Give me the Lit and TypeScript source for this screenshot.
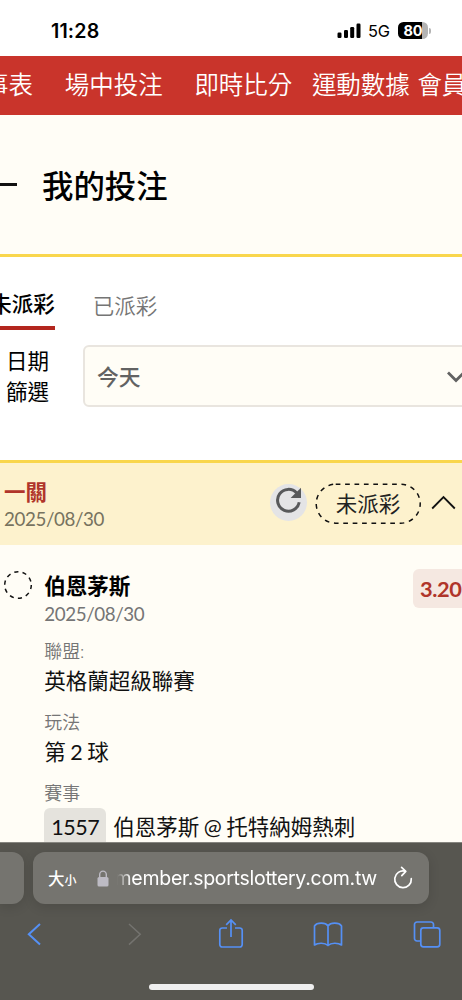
import { LitElement, html, css } from "lit";
import { customElement } from "lit/decorators.js";

@customElement("app-root")
export class AppRoot extends LitElement {
  static styles = css`
    :host {
      display: flex;
      flex-direction: column;
      width: 462px;
      height: 1000px;
      overflow: hidden;
      background: #fff;
      color: #111;
      font-family: "Lato", "Noto Sans CJK TC", sans-serif;
      font-size: 21.5px;
      white-space: nowrap;
    }
    * { box-sizing: border-box; }
    svg { display: block; flex: none; }
    .status {
      flex: none;
      height: 55.5px;
      padding: 6px 31px 0 51px;
      display: flex;
      align-items: center;
      font-family: "Inter", sans-serif;
      color: #000;
    }
    .time { flex: 1; font-size: 19.6px; font-weight: 600; letter-spacing: 0.15px; }
    .net { margin: 0 8px 0 7px; font-size: 16.4px; letter-spacing: -0.2px; width: 22px; }
    .battery { display: flex; align-items: center; gap: 1px; }
    .cell {
      width: 30px;
      height: 17px;
      border-radius: 5.5px;
      background: linear-gradient(90deg, #000 24px, #b3b3b3 24px);
      color: #fff;
      font-size: 14.5px;
      font-weight: 700;
      line-height: 17px;
      text-align: center;
    }
    .tip { width: 2px; height: 6px; border-radius: 0 2px 2px 0; background: #b3b3b3; }
    .nav {
      flex: none;
      height: 59.5px;
      display: flex;
      align-items: center;
      background: #c9342b;
      color: #fff;
      font-size: 24.5px;
      line-height: 36px;
      font-weight: 350;
    }
    .nav span { flex: none; }
    .nav .first { margin-left: -16px; }
    .nav .wide { margin-left: 31.7px; }
    .nav .mid { margin-left: 19.5px; }
    .nav .tight { margin-left: 7.5px; }
    .content {
      flex: 1;
      min-height: 0;
      overflow: hidden;
      display: flex;
      flex-direction: column;
      background: #fffdf6;
    }
    .title {
      flex: none;
      height: 142px;
      display: flex;
      align-items: center;
      gap: 25px;
      border-bottom: 3px solid #f9d64c;
      font-size: 31.4px;
      font-weight: 500;
      color: #000;
    }
    .dash { width: 17px; height: 3px; background: #111; }
    .filters { flex: none; height: 203px; background: #fff; padding-top: 29px; }
    .tabs { display: flex; height: 43px; }
    .tab { line-height: 36px; margin-left: 38px; padding-top: 2px; color: #757575; font-weight: 350; }
    .tab.active {
      margin-left: -9.7px;
      padding-top: 0;
      height: 44px;
      border-bottom: 4px solid #b3261e;
      color: #000;
      font-weight: 500;
    }
    .filter { display: flex; padding: 16px 0 0 6px; }
    .label { flex: none; width: 43px; padding-top: 1px; line-height: 31px; color: #000; }
    .select {
      flex: none;
      margin: 0 0 0 34px;
      width: 392px;
      height: 62px;
      border: 2px solid #e9e5df;
      border-radius: 6px;
      background: #fffdf6;
      padding: 0 8px 2px 12px;
      display: flex;
      align-items: center;
      justify-content: space-between;
      color: #626262;
      font-weight: 500;
      font-size: 21.8px;
    }
    .select svg { margin-top: 4px; }
    .group {
      flex: none;
      height: 85px;
      border-top: 3px solid #f9d64c;
      background: #fdf2cd;
      display: flex;
      padding-left: 4px;
    }
    .info { flex: 1; padding-top: 15px; }
    .name { color: #b0352a; font-weight: 700; line-height: 29px; }
    .date { font-size: 18.8px; letter-spacing: -0.42px; line-height: 24px; color: #757575; }
    .group .date { color: #77735f; }
    .refresh {
      width: 37px;
      height: 37px;
      margin-top: 21px;
      border-radius: 50%;
      background: #e4e4e6;
    }
    .pill {
      display: grid;
      margin: 20px 0 0 7.5px;
      width: 107px;
      height: 42px;
    }
    .pill > * { grid-area: 1 / 1; }
    .pill span { place-self: center; color: #222; line-height: 30px; }
    .caret { margin: 31px 6px 0 9.5px; }
    .bet { display: flex; padding: 24px 0 0 3px; }
    .ring { margin-top: 1px; }
    .detail { flex: 1; padding-left: 11.3px; display: flex; flex-direction: column; }
    .team { font-weight: 700; line-height: 35px; margin-bottom: -2px; color: #000; }
    .key { margin-top: 10px; font-size: 17.9px; line-height: 30px; font-weight: 350; color: #757575; }
    .value { line-height: 31px; color: #111; word-spacing: -1px; }
    .match { display: flex; align-items: center; gap: 7px; height: 39px; word-spacing: -1px; }
    .code {
      width: 62px;
      height: 39px;
      border-radius: 6px;
      background: #e5e3dd;
      text-align: center;
      line-height: 39px;
      letter-spacing: -0.4px;
    }
    .match span:last-child { line-height: 39px; }
    .odds {
      flex: none;
      width: 58px;
      height: 39px;
      margin: 0 -9px 0 0;
      border-radius: 6px;
      background: #f5e8e1;
      color: #b0352a;
      font-size: 21.8px;
      letter-spacing: -0.4px;
      font-weight: 700;
      line-height: 39px;
      padding-left: 7px;
    }
    .browser {
      flex: none;
      height: 158px;
      background: #575650;
      border-top: 1px solid #86857f;
      padding-top: 9px;
      display: flex;
      flex-direction: column;
      font-family: "Inter", "Noto Sans CJK TC", sans-serif;
      overflow: hidden;
    }
    .bars { display: flex; gap: 9.5px; }
    .prev, .address {
      height: 52px;
      background: #75746f;
      box-shadow: 0 3px 12px rgba(0, 0, 0, 0.12);
    }
    .prev { width: 23.5px; border-radius: 0 12px 12px 0; }
    .address {
      width: 396px;
      border-radius: 12px;
      display: flex;
      align-items: center;
      padding-left: 15px;
      color: #fff;
    }
    .big { font-size: 16.5px; font-weight: 500; }
    .small { font-size: 12px; font-weight: 500; padding-top: 3px; }
    .lock { margin-left: 20.5px; }
    .url {
      margin-left: 8px;
      width: 260px;
      display: flex;
      justify-content: flex-end;
      overflow: hidden;
      font-size: 19.5px;
      letter-spacing: -0.28px;
      line-height: 28px;
      -webkit-mask-image: linear-gradient(90deg, transparent, #000 14px);
      mask-image: linear-gradient(90deg, transparent, #000 14px);
    }
    .reload { margin-left: 14.5px; }
    .tools { display: flex; justify-content: space-between; padding: 12.5px 20.5px 0 20px; }
    .tools .forward { margin-left: 4px; }
    .tools .share { margin-left: 1px; }
    .home { width: 165px; height: 6px; border-radius: 3px; background: #efefef; margin: 33px 0 0 149px; }
  `;

  render() {
    return html`
      <div class="status">
        <span class="time">11:28</span>
        <svg width="24" height="16" viewBox="0 0 24 16">
          <rect x="0.5" y="9.5" width="4" height="5.5" rx="1.2" />
          <rect x="7" y="7" width="4" height="8" rx="1.2" />
          <rect x="13.2" y="4" width="4" height="11" rx="1.2" />
          <rect x="19.5" y="0.5" width="4" height="14.5" rx="1.2" />
        </svg>
        <span class="net">5G</span>
        <div class="battery"><div class="cell">80</div><div class="tip"></div></div>
      </div>
      <nav class="nav">
        <span class="first">事表</span>
        <span class="wide">場中投注</span>
        <span class="wide">即時比分</span>
        <span class="mid">運動數據</span>
        <span class="tight">會員</span>
      </nav>
      <main class="content">
        <div class="title"><div class="dash"></div><span>我的投注</span></div>
        <section class="filters">
          <div class="tabs">
            <div class="tab active">未派彩</div>
            <div class="tab">已派彩</div>
          </div>
          <div class="filter">
            <div class="label">日期<br />篩選</div>
            <div class="select">
              <span>今天</span>
              <svg width="18" height="12" viewBox="0 0 18 12" fill="none" stroke="#626262" stroke-width="2.8">
                <path d="M1 1.5 9 9.5 17 1.5" />
              </svg>
            </div>
          </div>
        </section>
        <section class="group">
          <div class="info">
            <div class="name">一關</div>
            <div class="date">2025/08/30</div>
          </div>
          <div class="refresh">
            <svg width="37" height="37" viewBox="0 0 37 37">
              <path d="M29.2 18.2A10.9 10.9 0 1 1 26.6 9" fill="none" stroke="#58595b" stroke-width="3" />
              <path d="M31 3.8V14H20.6Z" fill="#58595b" />
            </svg>
          </div>
          <div class="pill">
            <svg width="107" height="42" viewBox="0 0 107 42">
              <rect x="1.2" y="1.2" width="104" height="39" rx="19.5" fill="none" stroke="#111" stroke-width="1.5" stroke-dasharray="4.7 4.7" />
            </svg>
            <span>未派彩</span>
          </div>
          <svg class="caret" width="25" height="16" viewBox="0 0 25 16" fill="none" stroke="#111" stroke-width="1.8">
            <path d="M1.2 14.5 12.5 3 23.8 14.5" />
          </svg>
        </section>
        <section class="bet">
          <svg class="ring" width="30" height="30" viewBox="0 0 30 30">
            <circle cx="15" cy="15" r="13.3" fill="none" stroke="#111" stroke-width="1.5" stroke-dasharray="4.18 4.18" />
          </svg>
          <div class="detail">
            <div class="team">伯恩茅斯</div>
            <div class="date">2025/08/30</div>
            <div class="key">聯盟:</div>
            <div class="value">英格蘭超級聯賽</div>
            <div class="key">玩法</div>
            <div class="value">第 2 球</div>
            <div class="key">賽事</div>
            <div class="match"><span class="code">1557</span><span>伯恩茅斯 @ 托特納姆熱刺</span></div>
          </div>
          <div class="odds">3.20</div>
        </section>
      </main>
      <footer class="browser">
        <div class="bars">
          <div class="prev"></div>
          <div class="address">
            <span class="big">大</span><span class="small">小</span>
            <svg class="lock" width="12" height="17" viewBox="0 0 12 17">
              <rect x="0.5" y="7" width="11" height="9.5" rx="1.6" fill="#bdbbc4" />
              <path d="M2.7 8V4.6a3.3 3.5 0 0 1 6.6 0V8" fill="none" stroke="#bdbbc4" stroke-width="1.4" />
            </svg>
            <span class="url"><span>member.sportslottery.com.tw</span></span>
            <svg class="reload" width="22" height="24" viewBox="0 0 22 24" fill="none" stroke="#fff" stroke-width="1.7" stroke-linecap="round" stroke-linejoin="round">
              <path d="M19.3 12.7A8.3 8.3 0 1 1 13 5.2" />
              <path d="M9.6 1.4 13.8 5.4 9.8 9.6" />
            </svg>
          </div>
        </div>
        <div class="tools">
          <svg width="28" height="34" viewBox="0 0 28 34" fill="none" stroke="#5590f5" stroke-width="2">
            <path d="M20 7 8.8 17.3 20 27.6" />
          </svg>
          <svg class="forward" width="28" height="34" viewBox="0 0 28 34" fill="none" stroke="#74736f" stroke-width="1.5">
            <path d="M9 7 20.2 17.3 9 27.6" />
          </svg>
          <svg class="share" width="28" height="34" viewBox="0 0 28 34" fill="none" stroke="#5590f5" stroke-width="1.7">
            <path d="M10 11H5.2A2.4 2.4 0 0 0 2.8 13.4V27.6A2.4 2.4 0 0 0 5.2 30H22.8A2.4 2.4 0 0 0 25.2 27.6V13.4A2.4 2.4 0 0 0 22.8 11H18M14 20V3.2M9.2 7.8 14 3 18.8 7.8" />
          </svg>
          <svg width="30" height="34" viewBox="0 0 30 34" fill="none" stroke="#5590f5" stroke-width="1.7" stroke-linejoin="round">
            <path d="M15 9C12.5 5.2 4 5.2 1.5 9V28C5 25.6 12 25.6 15 28.5ZM15 9C17.5 5.2 26 5.2 28.5 9V28C25 25.6 18 25.6 15 28.5Z" />
          </svg>
          <svg width="30" height="34" viewBox="0 0 30 34" fill="none" stroke="#5590f5" stroke-width="1.7">
            <rect x="8.8" y="10.8" width="19" height="19" rx="2.6" />
            <path d="M8.8 24H5A2.5 2.5 0 0 1 2.5 21.5V7.5A2.5 2.5 0 0 1 5 5H19A2.5 2.5 0 0 1 21.5 7.5V10.8" />
          </svg>
        </div>
        <div class="home"></div>
      </footer>
    `;
  }
}
